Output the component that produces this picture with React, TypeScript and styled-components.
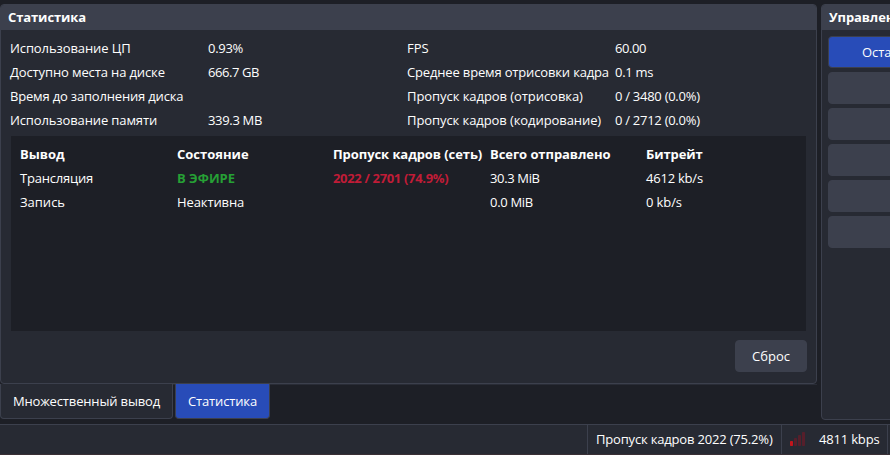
import React from "react";
import styled, { createGlobalStyle, css } from "styled-components";

const c = {
  bg: "#1d1f26",
  panel: "#272a33",
  line: "#3c404d",
  blue: "#284cb8",
  text: "#fefefe",
};

const Global = createGlobalStyle`
  * { box-sizing: border-box; }
  html, body { margin: 0; background: ${c.bg}; overflow: hidden; }
  body {
    font-family: "Open Sans", "Noto Sans", sans-serif;
    font-size: 13px;
    line-height: 24px;
    color: ${c.text};
    white-space: nowrap;
  }
`;

const Window = styled.div`
  width: 890px;
  height: 455px;
  display: flex;
  flex-direction: column;
  overflow: hidden;
`;

const Workspace = styled.main`
  height: 424px;
  padding-top: 4px;
  display: flex;
  gap: 4px;
`;

const LeftColumn = styled.div`
  width: 817px;
  flex: none;
`;

const Dock = styled.section<{ $height: number; $width?: number }>`
  height: ${(p) => p.$height}px;
  ${(p) => p.$width && css`width: ${p.$width}px;`}
  flex: none;
  background: ${c.panel};
  border: 1px solid ${c.line};
  border-radius: 4px;
  overflow: hidden;
`;

const DockTitle = styled.h2`
  margin: 0;
  height: 25px;
  padding-left: 7px;
  background: ${c.line};
  font-size: 13px;
  font-weight: 700;
  line-height: 24px;
  letter-spacing: -0.1px;
`;

const Stats = styled.dl`
  margin: 6px 0 0 9px;
  display: grid;
  grid-template-columns: 198px 199px 208px 1fr;
  grid-auto-rows: 24px;
`;

const Label = styled.dt<{ $track: number }>`
  letter-spacing: ${(p) => p.$track}px;
`;

const Value = styled.dd<{ $track: number }>`
  margin: 0;
  letter-spacing: ${(p) => p.$track}px;
`;

const Outputs = styled.div`
  margin: 4px 10px 0 10px;
  width: 795px;
  height: 195px;
  padding: 6px 9px;
  background: ${c.bg};
  display: grid;
  grid-template-columns: 157px 156px 157px 156px 1fr;
  grid-auto-rows: 24px;
`;

const Cell = styled.span<{ $bold?: boolean; $color?: string; $track?: number }>`
  font-weight: ${(p) => (p.$bold ? 700 : 400)};
  color: ${(p) => p.$color ?? c.text};
  letter-spacing: ${(p) => p.$track ?? 0}px;
`;

const Actions = styled.div`
  display: flex;
  justify-content: flex-end;
  padding: 9px 9px 0 0;
`;

const Button = styled.button<{ $primary?: boolean; $width: number }>`
  width: ${(p) => p.$width}px;
  height: 32px;
  flex: none;
  padding: 0;
  border: 1px solid ${c.line};
  border-radius: 4px;
  background: ${(p) => (p.$primary ? c.blue : c.line)};
  color: ${c.text};
  font: inherit;
  line-height: 30px;
`;

const Tabs = styled.nav`
  display: flex;
  gap: 2px;
  height: 35px;
  border-top: 1px solid #292c36;
`;

const Tab = styled.div<{ $active?: boolean; $width: number }>`
  width: ${(p) => p.$width}px;
  height: 35px;
  margin-top: -1px;
  border: 1px solid ${c.line};
  border-top: 0;
  border-radius: 0 0 4px 4px;
  background: ${(p) => (p.$active ? c.blue : c.panel)};
  text-align: center;
  line-height: 35px;
  letter-spacing: -0.15px;
`;

const Controls = styled.div`
  display: flex;
  flex-direction: column;
  gap: 4px;
  padding: 6px 6px 0;
`;

const StatusBar = styled.footer`
  height: 31px;
  flex: none;
  display: flex;
  justify-content: flex-end;
  background: ${c.panel};
  border-top: 1px solid ${c.line};
  border-bottom: 1px solid #392f35;
  line-height: 28px;
  letter-spacing: -0.18px;
`;

const StatusItem = styled.div<{ $width: number }>`
  width: ${(p) => p.$width}px;
  flex: none;
  border-left: 1px solid ${c.line};
  padding-left: 8px;
  display: flex;
  gap: 14px;
`;

const StatusEnd = styled.div`
  width: 3px;
  flex: none;
  border-left: 1px solid ${c.line};
`;

const Signal = styled.svg`
  width: 15px;
  height: 14px;
  margin-top: 7px;
  flex: none;
`;

type Entry = [string, number];

const stats: Entry[][] = [
  [["Использование ЦП", -0.1], ["0.93%", -0.3], ["FPS", 0], ["60.00", -0.4]],
  [["Доступно места на диске", -0.12], ["666.7 GB", -0.42], ["Среднее время отрисовки кадра", -0.16], ["0.1 ms", -0.3]],
  [["Время до заполнения диска", -0.18], ["", 0], ["Пропуск кадров (отрисовка)", -0.06], ["0 / 3480 (0.0%)", -0.27]],
  [["Использование памяти", -0.12], ["339.3 MB", -0.33], ["Пропуск кадров (кодирование)", -0.08], ["0 / 2712 (0.0%)", -0.27]],
];

const headings: Entry[] = [
  ["Вывод", 0],
  ["Состояние", 0],
  ["Пропуск кадров (сеть)", -0.07],
  ["Всего отправлено", -0.06],
  ["Битрейт", -0.1],
];

export default function App() {
  return (
    <Window>
      <Global />
      <Workspace>
        <LeftColumn>
          <Dock $height={380}>
            <DockTitle>Статистика</DockTitle>
            <Stats>
              {stats.map(([a, av, b, bv]) => (
                <React.Fragment key={a[0]}>
                  <Label $track={a[1]}>{a[0]}</Label>
                  <Value $track={av[1]}>{av[0]}</Value>
                  <Label $track={b[1]}>{b[0]}</Label>
                  <Value $track={bv[1]}>{bv[0]}</Value>
                </React.Fragment>
              ))}
            </Stats>
            <Outputs>
              {headings.map(([h, track]) => (
                <Cell key={h} $bold $track={track}>{h}</Cell>
              ))}
              <Cell $track={-0.2}>Трансляция</Cell>
              <Cell $bold $color="#26a035">В ЭФИРЕ</Cell>
              <Cell $bold $color="#c01c37" $track={-0.33}>2022 / 2701 (74.9%)</Cell>
              <Cell $track={-0.35}>30.3 MiB</Cell>
              <Cell $track={-0.22}>4612 kb/s</Cell>
              <Cell>Запись</Cell>
              <Cell $track={-0.1}>Неактивна</Cell>
              <Cell />
              <Cell $track={-0.3}>0.0 MiB</Cell>
              <Cell $track={-0.1}>0 kb/s</Cell>
            </Outputs>
            <Actions>
              <Button $width={72}>Сброс</Button>
            </Actions>
          </Dock>
          <Tabs>
            <Tab $width={173}>Множественный вывод</Tab>
            <Tab $width={95} $active>Статистика</Tab>
          </Tabs>
        </LeftColumn>
        <Dock $height={416} $width={238}>
          <DockTitle>Управление</DockTitle>
          <Controls>
            <Button $width={224} $primary>Остановить трансляцию</Button>
            {[1, 2, 3, 4, 5].map((n) => (
              <Button key={n} $width={224} />
            ))}
          </Controls>
        </Dock>
      </Workspace>
      <StatusBar>
        <StatusItem $width={194}>Пропуск кадров 2022 (75.2%)</StatusItem>
        <StatusItem $width={106}>
          <Signal viewBox="0 0 15 14">
            <rect x="0" y="9" width="3" height="5" rx="0.7" fill="#c4151c" />
            <rect x="4" y="6" width="3" height="8" rx="0.7" fill="#561f2b" />
            <rect x="8" y="3" width="3" height="11" rx="0.7" fill="#561f2b" />
            <rect x="12" y="0" width="3" height="14" rx="0.7" fill="#561f2b" />
          </Signal>
          4811 kbps
        </StatusItem>
        <StatusEnd />
      </StatusBar>
    </Window>
  );
}
